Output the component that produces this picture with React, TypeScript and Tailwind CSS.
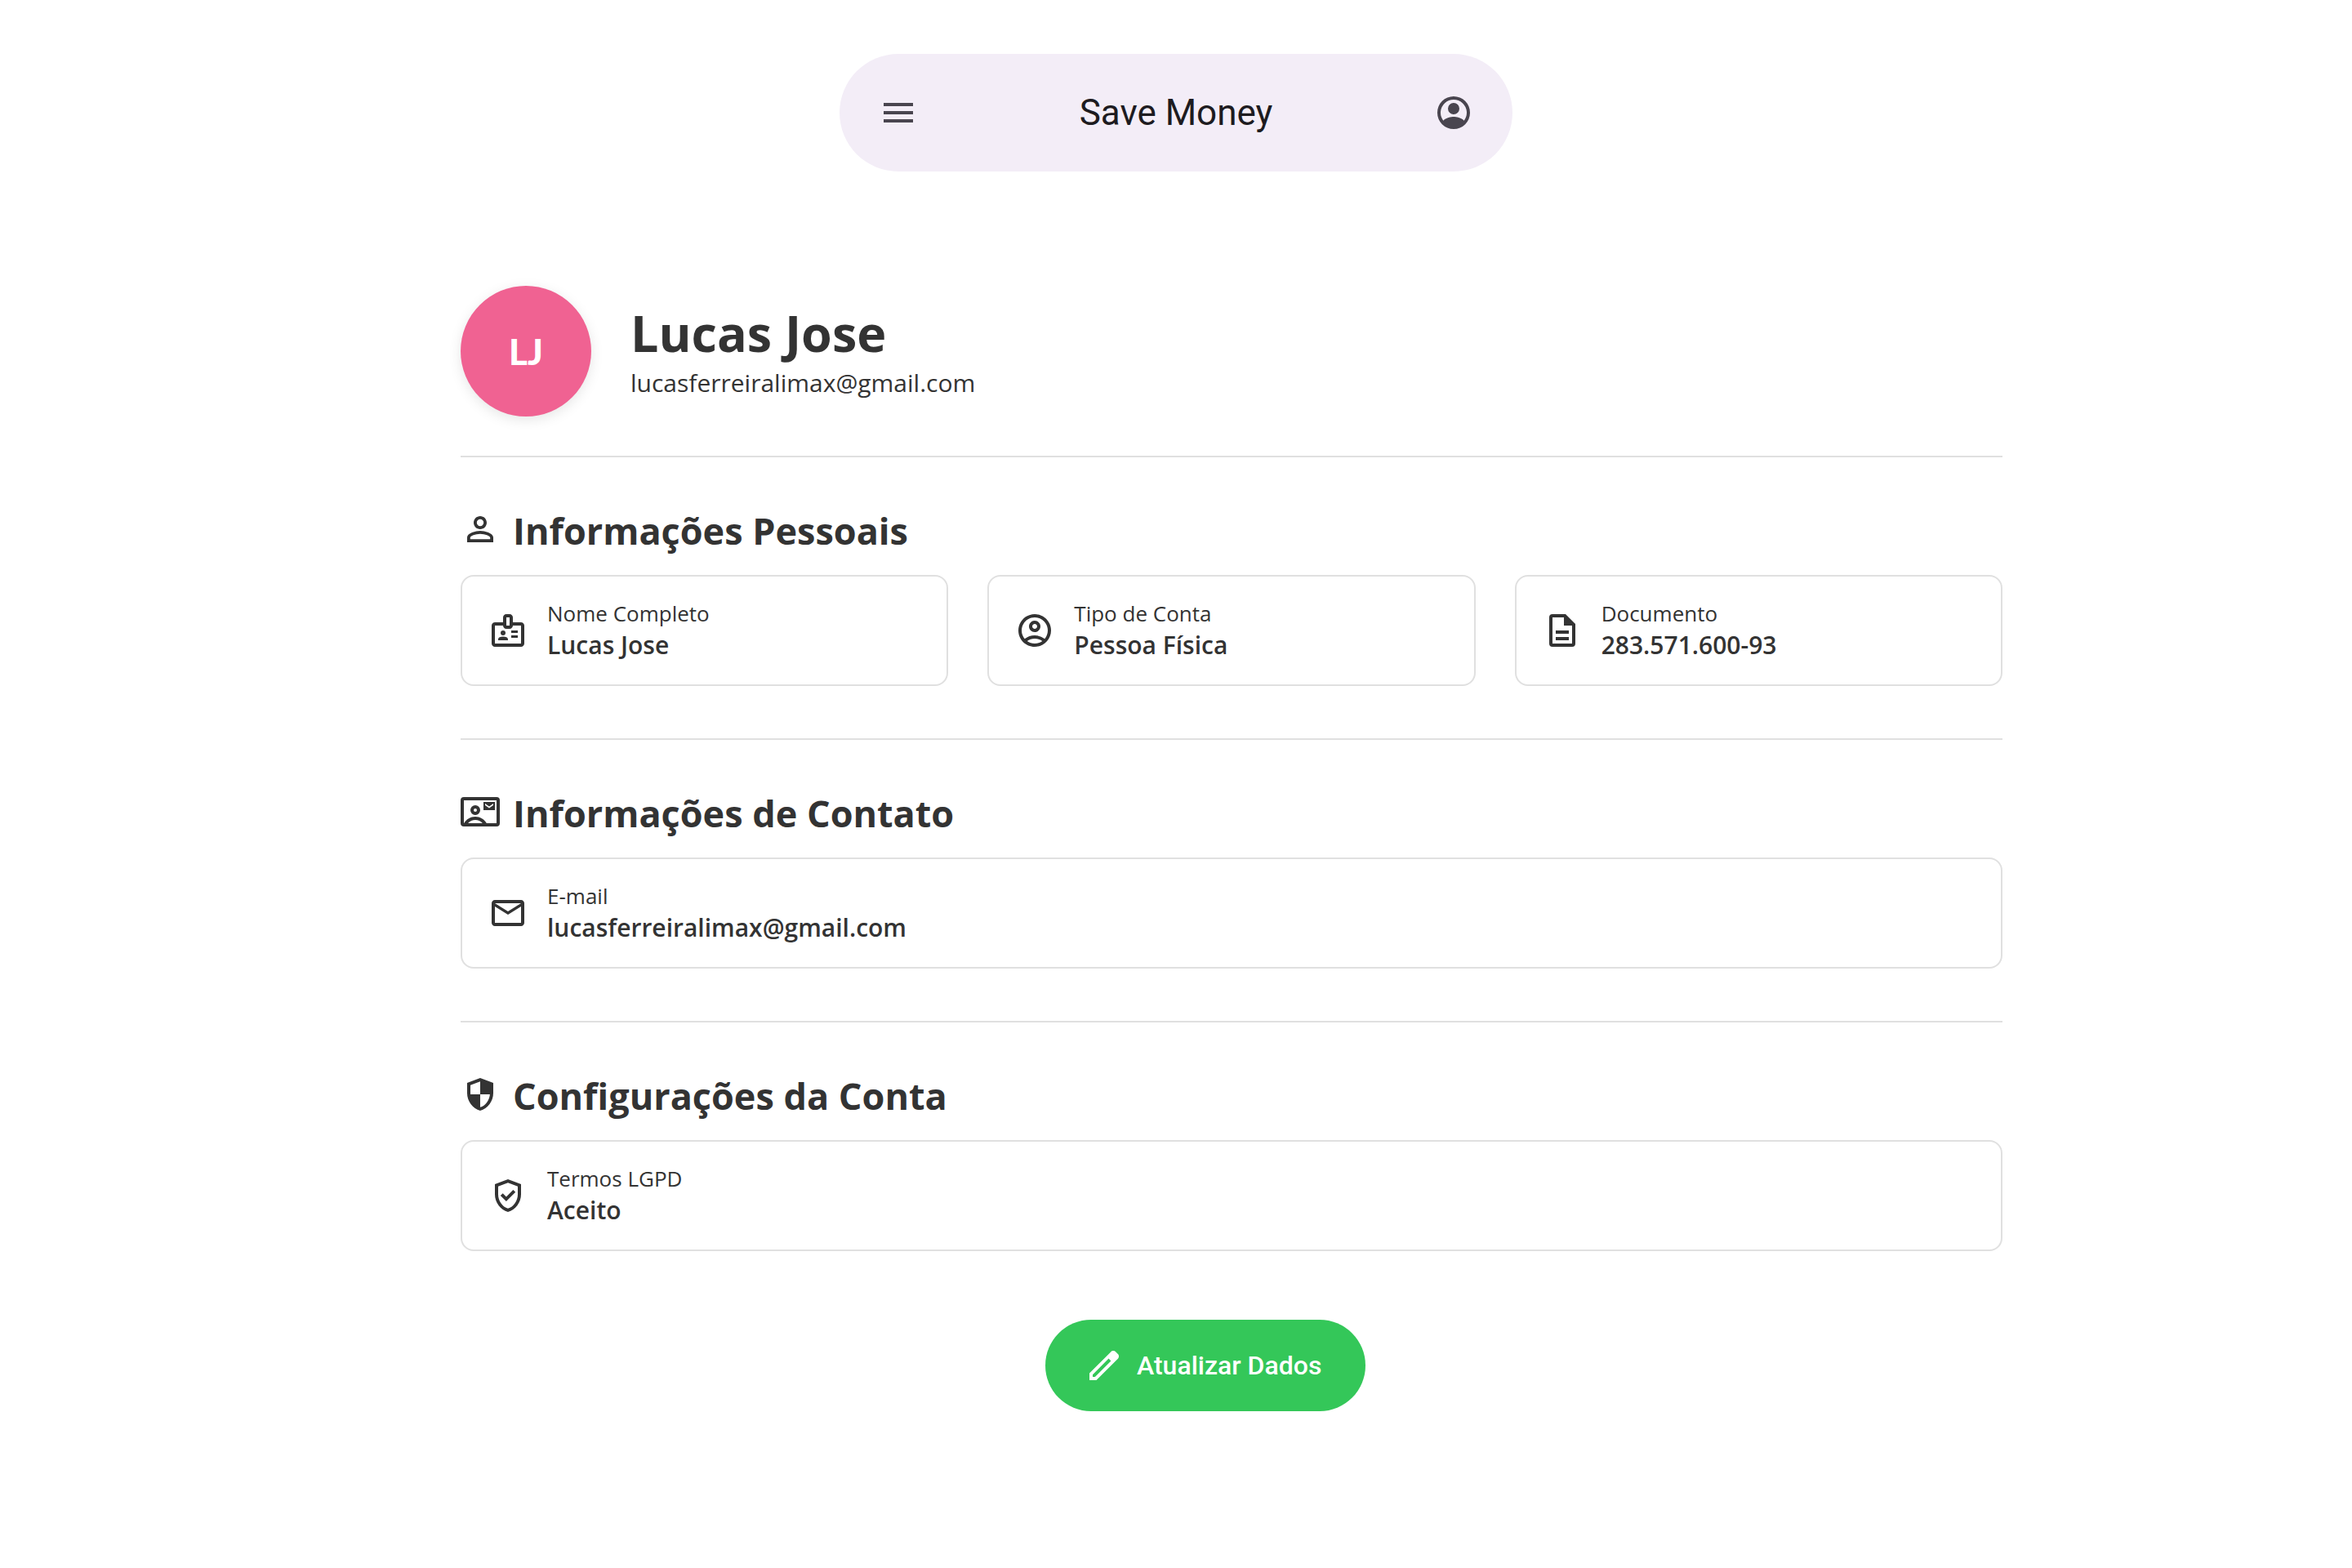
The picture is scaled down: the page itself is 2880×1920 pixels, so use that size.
import type { ReactNode } from "react";
import {
  MdMenu,
  MdPersonOutline,
  MdOutlineBadge,
  MdOutlineAccountCircle,
  MdMailOutline,
} from "react-icons/md";

type IconProps = { d: string; className?: string };

function Glyph({ d, className = "size-12" }: IconProps) {
  return (
    <svg viewBox="0 0 24 24" fill="currentColor" fillRule="evenodd" aria-hidden="true" className={className}>
      <path d={d} />
    </svg>
  );
}

const paths = {
  profile:
    "M12 2a10 10 0 1 0 0 20a10 10 0 1 0 0-20zM18.36 16.83C16.93 15.09 13.46 14.5 12 14.5s-4.93.59-6.36 2.33A8 8 0 1 1 18.36 16.83zM12 6a3.5 3.5 0 1 0 0 7a3.5 3.5 0 1 0 0-7z",
  document:
    "M6 2h8l6 6v12a2 2 0 0 1-2 2H6a2 2 0 0 1-2-2V4a2 2 0 0 1 2-2zM13 4H6v16h12V9h-5zM8 12h8v2H8zM8 16h8v2H8z",
  contact:
    "M2 3h20a2 2 0 0 1 2 2v14a2 2 0 0 1-2 2H2a2 2 0 0 1-2-2V5a2 2 0 0 1 2-2zM2 5v14h.1C3.5 16.5 6.1 15 9 15s5.5 1.5 6.9 4H22V5zM4.55 19h8.9C12.3 17.7 10.7 17 9 17s-3.3.7-4.45 2zM9 8a3 3 0 1 0 0 6a3 3 0 1 0 0-6zM9 10a1 1 0 1 0 0 2a1 1 0 1 0 0-2zM14 6h7v5h-7zM15 7v1l2.5 1.75L20 8V7l-2.5 1.75z",
  shieldQuarters:
    "M12 22C9.683 21.417 7.771 20.087 6.262 18.012C4.754 15.937 4 13.633 4 11.1V5l8-3l8 3v6.1c0 2.533-.754 4.837-2.262 6.912C16.229 20.087 14.317 21.417 12 22zM12 19.9c1.617-.5 2.967-1.475 4.05-2.925S17.783 13.9 17.95 12H12V4.125L6 6.375V12h6z",
  shieldCheck:
    "M12 22C9.683 21.417 7.771 20.087 6.262 18.012C4.754 15.937 4 13.633 4 11.1V5l8-3l8 3v6.1c0 2.533-.754 4.837-2.262 6.912C16.229 20.087 14.317 21.417 12 22zM12 19.9c1.733-.55 3.167-1.65 4.3-3.3S18 13.117 18 11.1V6.375L12 4.125L6 6.375V11.1c0 2.017.567 3.85 1.7 5.5s2.567 2.75 4.3 3.3zM10.95 15.55L16.6 9.9l-1.425-1.425l-4.225 4.225L8.85 10.6L7.4 12z",
  pencil:
    "M5 19h1.425L16.2 9.225L14.775 7.8L5 17.575zM3 21v-4.25L16.2 3.575q.3-.275.663-.425T17.625 3t.775.15t.65.45L20.425 5q.3.275.438.65T21 6.4q0 .4-.137.763t-.438.662L7.25 21z",
};

function Section({ icon, title, children }: { icon: ReactNode; title: string; children: ReactNode }) {
  return (
    <section className="border-t-2 border-[#e0e0e0] py-16">
      <h2 className="flex h-12 items-center gap-4 text-[45px] leading-[48px] font-bold">
        {icon}
        <span className="pt-1">{title}</span>
      </h2>
      <div className="mt-8 flex gap-12">{children}</div>
    </section>
  );
}

function InfoCard({ icon, label, value }: { icon: ReactNode; label: string; value: string }) {
  return (
    <div className="flex h-34 flex-1 items-center gap-6 rounded-2xl border-2 border-[#e0e0e0] px-8">
      {icon}
      <dl>
        <dt className="text-[26px] leading-9">{label}</dt>
        <dd className="text-[30px] leading-[42px] font-semibold">{value}</dd>
      </dl>
    </div>
  );
}

export default function App() {
  return (
    <div className="min-h-screen bg-white pt-[66px] font-['Open_Sans',sans-serif] text-[#333333]">
      <header className="mx-auto flex h-36 w-full max-w-[824px] items-center justify-between rounded-full bg-[#f3edf7] px-12 font-['Roboto',sans-serif] text-[#49454f]">
        <button type="button" aria-label="Menu">
          <MdMenu className="size-12" />
        </button>
        <h1 className="text-[44px] leading-[56px] text-[#1d1b20]">Save Money</h1>
        <button type="button" aria-label="Perfil">
          <Glyph d={paths.profile} />
        </button>
      </header>

      <main className="mt-35 pr-[428px] pl-[564px]">
        <div className="flex items-center gap-12 pb-12">
          <div className="flex size-40 shrink-0 items-center justify-center rounded-full bg-[#f06292] font-['Lato',sans-serif] text-[44px] font-black text-white shadow-[0_4px_16px_rgba(0,0,0,0.1)]">
            LJ
          </div>
          <div>
            <h2 className="text-[61px] leading-[78px] font-bold">Lucas Jose</h2>
            <p className="text-[30px] leading-[44px]">lucasferreiralimax@gmail.com</p>
          </div>
        </div>

        <Section icon={<MdPersonOutline className="size-12" />} title="Informações Pessoais">
          <InfoCard icon={<MdOutlineBadge className="size-12" />} label="Nome Completo" value="Lucas Jose" />
          <InfoCard icon={<MdOutlineAccountCircle className="size-12" />} label="Tipo de Conta" value="Pessoa Física" />
          <InfoCard icon={<Glyph d={paths.document} />} label="Documento" value="283.571.600-93" />
        </Section>

        <Section icon={<Glyph d={paths.contact} />} title="Informações de Contato">
          <InfoCard icon={<MdMailOutline className="size-12" />} label="E-mail" value="lucasferreiralimax@gmail.com" />
        </Section>

        <Section icon={<Glyph d={paths.shieldQuarters} />} title="Configurações da Conta">
          <InfoCard icon={<Glyph d={paths.shieldCheck} />} label="Termos LGPD" value="Aceito" />
        </Section>

        <div className="mt-5 flex justify-center pr-16">
          <button
            type="button"
            className="flex h-28 min-w-[392px] items-center gap-4 rounded-full bg-[#34c759] px-12 font-['Roboto',sans-serif] text-[32px] font-medium text-white"
          >
            <Glyph d={paths.pencil} />
            Atualizar Dados
          </button>
        </div>
      </main>
    </div>
  );
}
